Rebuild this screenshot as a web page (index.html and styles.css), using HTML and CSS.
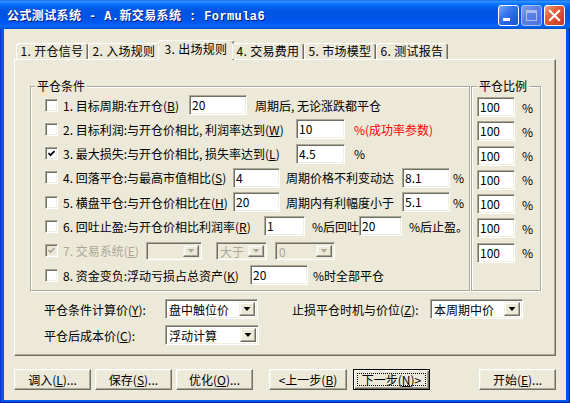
FILE: index.html
```html
<!DOCTYPE html>
<html lang="zh-CN">
<head>
  <meta charset="UTF-8">
  <title>公式测试系统</title>
  <link rel="stylesheet" href="styles.css">
</head>
<body>

<div class="window">
  <!-- Title bar -->
  <div class="titlebar">
    <span class="title">公式测试系统 - A.新交易系统 : Formula6</span>
    <div class="caption">
      <span class="cap cap-min"><i></i></span>
      <span class="cap cap-max"><i></i></span>
      <span class="cap cap-close">
        <svg width="19" height="19" viewBox="0 0 19 19"><path d="M5 5 L14 14 M14 5 L5 14" stroke="#fff" stroke-width="2.2" stroke-linecap="square"/></svg>
      </span>
    </div>
  </div>

  <div class="client">
    <!-- Tabs -->
    <ul class="tabs">
      <li class="tab">1. 开仓信号</li>
      <li class="tab">2. 入场规则</li>
      <li class="tab active">3. 出场规则</li>
      <li class="tab">4. 交易费用</li>
      <li class="tab">5. 市场模型</li>
      <li class="tab">6. 测试报告</li>
    </ul>

    <div class="panel">
      <div class="groups">
        <!-- Exit conditions -->
        <div class="group conds">
          <span class="legend">平仓条件</span>
          <div class="rows">
            <div class="row">
              <span class="chk"></span>
              <span class="lbl w126">1. 目标周期:在开仓(<u>B</u>)</span>
              <span class="edit e58">20</span>
              <span class="ml8">周期后, 无论涨跌都平仓</span>
            </div>
            <div class="row">
              <span class="chk"></span>
              <span class="lbl w233">2. 目标利润:与开仓价相比, 利润率达到(<u>W</u>)</span>
              <span class="edit e49">10</span>
              <span class="ml9 red">%(成功率参数)</span>
            </div>
            <div class="row">
              <span class="chk checked"><svg width="7" height="7" viewBox="0 0 7 7"><path d="M0.5 3 L2.5 5.2 L6.5 1" fill="none" stroke="#000" stroke-width="1.7"/></svg></span>
              <span class="lbl w233">3. 最大损失:与开仓价相比, 损失率达到(<u>L</u>)</span>
              <span class="edit e49">4.5</span>
              <span class="ml9">%</span>
            </div>
            <div class="row">
              <span class="chk"></span>
              <span class="lbl w170">4. 回落平仓:与最高市值相比(<u>S</u>)</span>
              <span class="edit e47">4</span>
              <span class="mid ml6 w116">周期价格不利变动达</span>
              <span class="edit e48">8.1</span>
              <span class="ml3">%</span>
            </div>
            <div class="row">
              <span class="chk"></span>
              <span class="lbl w170">5. 横盘平仓:与开仓价相比在(<u>H</u>)</span>
              <span class="edit e47">20</span>
              <span class="mid ml6 w116">周期内有利幅度小于</span>
              <span class="edit e48">5.1</span>
              <span class="ml3">%</span>
            </div>
            <div class="row">
              <span class="chk"></span>
              <span class="lbl w201">6. 回吐止盈:与开仓价相比利润率(<u>R</u>)</span>
              <span class="edit e41">1</span>
              <span class="mid ml7 w47">%后回吐</span>
              <span class="edit e43">20</span>
              <span class="ml7">%后止盈。</span>
            </div>
            <div class="row disabled">
              <span class="chk checked"><svg width="7" height="7" viewBox="0 0 7 7"><path d="M0.5 3 L2.5 5.2 L6.5 1" fill="none" stroke="#aca899" stroke-width="1.7"/></svg></span>
              <span class="lbl w83">7. 交易系统(<u>E</u>)</span>
              <span class="combo c56"><span class="combo-text"></span><span class="combo-btn"></span></span>
              <span class="combo c51 ml14"><span class="combo-text">大于</span><span class="combo-btn"></span></span>
              <span class="combo c60 ml8"><span class="combo-text">0</span><span class="combo-btn"></span></span>
            </div>
            <div class="row">
              <span class="chk"></span>
              <span class="lbl w187">8. 资金变负:浮动亏损占总资产(<u>K</u>)</span>
              <span class="edit e58">20</span>
              <span class="ml5">%时全部平仓</span>
            </div>
          </div>
        </div>

        <!-- Exit ratio -->
        <div class="group ratios">
          <span class="legend">平仓比例</span>
          <div class="rows">
            <div class="row"><span class="edit e38">100</span><span class="ml7">%</span></div>
            <div class="row"><span class="edit e38">100</span><span class="ml7">%</span></div>
            <div class="row"><span class="edit e38">100</span><span class="ml7">%</span></div>
            <div class="row"><span class="edit e38">100</span><span class="ml7">%</span></div>
            <div class="row"><span class="edit e38">100</span><span class="ml7">%</span></div>
            <div class="row"><span class="edit e38">100</span><span class="ml7">%</span></div>
            <div class="row"><span class="edit e38">100</span><span class="ml7">%</span></div>
          </div>
        </div>
      </div>

      <!-- Price options -->
      <div class="options">
        <div class="opt-row">
          <span class="w121">平仓条件计算价(<u>Y</u>):</span>
          <span class="combo c93"><span class="combo-text">盘中触位价</span><span class="combo-btn"></span></span>
          <span class="w138 ml34">止损平仓时机与价位(<u>Z</u>):</span>
          <span class="combo c93"><span class="combo-text">本周期中价</span><span class="combo-btn"></span></span>
        </div>
        <div class="opt-row">
          <span class="w121">平仓后成本价(<u>C</u>):</span>
          <span class="combo c94"><span class="combo-text">浮动计算</span><span class="combo-btn"></span></span>
        </div>
      </div>
    </div>

    <!-- Dialog buttons -->
    <div class="buttons">
      <button class="btn">调入(<u>L</u>)...</button>
      <button class="btn">保存(<u>S</u>)...</button>
      <button class="btn">优化(<u>O</u>)...</button>
      <button class="btn prev">&lt;上一步(<u>B</u>)</button>
      <button class="btn default"><span class="focus">下一步(<u>N</u>)&gt;</span></button>
      <button class="btn start">开始(<u>E</u>)...</button>
    </div>
  </div>
</div>

</body>
</html>
```

FILE: styles.css
```css
* {
  box-sizing: border-box;
}
html, body {
  margin: 0;
}
body {
  width: 570px;
  height: 403px;
  font-family: "Noto Sans CJK SC", "Liberation Sans", sans-serif;
  font-size: 12px;
  color: #000;
  background: #fff;
}
u {
  text-decoration: underline;
}

/* window frame */
.window {
  width: 570px;
  height: 403px;
  display: flex;
  flex-direction: column;
  background: #0055ea;
  box-shadow: inset 1px 0 #0831d9, inset -1px 0 #001ea0, inset 0 -1px #001ea0;
}
.titlebar {
  height: 29px;
  flex: none;
  display: flex;
  align-items: center;
  padding: 0 5px 0 7px;
  background: linear-gradient(to bottom, #0058ee 0px, #3a93ff 1px, #288eff 2px, #127dff 3px, #036ffc 5px, #0262ee 7px, #0057e5 10px, #0054e3 14px, #0055eb 20px, #005bf5 24px, #026afe 26px, #0062ef 27px, #0052d6 28px);
}
.title {
  color: #fff;
  font-family: "Liberation Mono", "Noto Sans CJK SC", monospace;
  font-weight: bold;
  font-size: 12px;
  letter-spacing: 0.4px;
  white-space: nowrap;
  text-shadow: 1px 1px #0a1883;
}
.caption {
  margin-left: auto;
  display: flex;
  gap: 2px;
  margin-top: 2px;
}
.cap {
  width: 21px;
  height: 21px;
  border: 1px solid #fff;
  border-radius: 3px;
  display: flex;
  align-items: center;
  justify-content: center;
  background: linear-gradient(135deg, #7fa9fb 0%, #3a78ee 35%, #2560e0 70%, #1c50d2 100%);
}
.cap-min {
  align-items: flex-end;
  justify-content: flex-start;
  padding: 0 0 4px 4px;
}
.cap-min i {
  width: 7px;
  height: 3px;
  background: #fff;
}
.cap-max {
  border-color: #a9c0f2;
  background: linear-gradient(135deg, #7f9ff0 0%, #5a81ea 40%, #4b72e2 100%);
}
.cap-max i {
  width: 11px;
  height: 11px;
  border: 1px solid #a8bdf0;
  border-top-width: 3px;
}
.cap-close {
  background: linear-gradient(135deg, #f2a58d 0%, #e3623d 35%, #d6482a 70%, #c23a1c 100%);
}

/* client area */
.client {
  flex: 1;
  margin: 0 4px 4px;
  padding: 11px 10px 10px;
  background: #ece9d8;
  display: flex;
  flex-direction: column;
}

/* tabs */
.tabs {
  display: flex;
  align-items: flex-end;
  height: 20px;
  margin: 0;
  padding: 0 0 0 2px;
  list-style: none;
  position: relative;
  z-index: 1;
}
.tab {
  width: 72px;
  height: 16px;
  margin-bottom: 1px;
  border: 1px solid;
  border-bottom: none;
  border-color: #fff #716f64 #716f64 #fff;
  border-radius: 3px 3px 0 0;
  box-shadow: inset -1px 0 #aca899;
  background: #ece9d8;
  text-align: center;
  line-height: 14px;
  letter-spacing: 0.3px;
  white-space: nowrap;
}
.tab.active {
  width: 76px;
  height: 20px;
  margin: 0 -2px;
  line-height: 16px;
}

/* tab page */
.panel {
  height: 297px;
  margin-top: -1px;
  border: 1px solid;
  border-color: #fff #716f64 #716f64 #fff;
  box-shadow: inset -1px -1px #aca899;
  padding: 26px 0 0 15px;
}
.groups {
  display: flex;
  gap: 1px;
}
.group {
  position: relative;
  height: 205px;
  border: 1px solid #aca899;
  box-shadow: inset 1px 1px #fff, 1px 1px #fff;
}
.legend {
  position: absolute;
  top: -8px;
  left: 4px;
  padding: 0 2px;
  line-height: 14px;
  background: #ece9d8;
}
.conds {
  width: 440px;
  padding: 8px 0 0 14px;
}
.ratios {
  width: 70px;
  padding: 10px 0 0 5px;
}
.ratios .legend {
  left: 5px;
}
.rows {
  display: flex;
  flex-direction: column;
  gap: 4.3px;
}
.row {
  display: flex;
  align-items: center;
  height: 20px;
  white-space: nowrap;
}
.row.disabled {
  color: #aca899;
}

/* checkbox */
.chk {
  width: 13px;
  height: 13px;
  flex: none;
  display: flex;
  align-items: center;
  justify-content: center;
  border: 1px solid;
  border-color: #aca899 #fff #fff #aca899;
  box-shadow: inset 1px 1px #716f64, inset -1px -1px #f1efe2;
  background: #fff;
}
.disabled .chk {
  background: #ece9d8;
}

.lbl {
  margin-left: 5px;
  flex: none;
}
.mid {
  flex: none;
}

/* edit box */
.edit {
  height: 20px;
  flex: none;
  padding: 0 2px;
  line-height: 17px;
  border: 1px solid;
  border-color: #aca899 #fff #fff #aca899;
  box-shadow: inset 1px 1px #716f64, inset -1px -1px #f1efe2;
  background: #fff;
}

/* combo box */
.combo {
  display: flex;
  flex: none;
  height: 20px;
  padding: 2px;
  border: 1px solid;
  border-color: #aca899 #fff #fff #aca899;
  box-shadow: inset 1px 1px #716f64, inset -1px -1px #f1efe2;
  background: #fff;
}
.combo-text {
  flex: 1;
  padding-left: 1px;
  line-height: 15px;
}
.combo-btn {
  width: 16px;
  display: flex;
  align-items: center;
  justify-content: center;
  background: #ece9d8;
  border: 1px solid;
  border-color: #f1efe2 #716f64 #716f64 #f1efe2;
  box-shadow: inset -1px -1px #aca899, inset 1px 1px #fff;
}
.combo-btn::after {
  content: "";
  width: 7px;
  height: 4px;
  background: #000;
  clip-path: polygon(0 0, 100% 0, 50% 100%);
}
.disabled .combo {
  height: 18px;
  background: #ece9d8;
}
.disabled .combo-text {
  line-height: 13px;
}
.disabled .combo-btn::after {
  background: #aca899;
}

.red {
  color: #f00;
}

/* price options */
.options {
  margin-top: 8px;
  padding-left: 14px;
  display: flex;
  flex-direction: column;
  gap: 6px;
}
.opt-row {
  display: flex;
  align-items: center;
  height: 20px;
  white-space: nowrap;
}
.opt-row > span:not(.combo) {
  flex: none;
}

/* buttons */
.buttons {
  display: flex;
  gap: 4px;
  margin-top: 13px;
}
.btn {
  width: 77px;
  height: 21px;
  padding: 0;
  font: inherit;
  color: #000;
  background: #ece9d8;
  border: 1px solid;
  border-color: #fff #716f64 #716f64 #fff;
  box-shadow: inset -1px -1px #aca899, inset 1px 1px #f1efe2;
  white-space: nowrap;
}
.btn.prev {
  margin-left: 12px;
  width: 78px;
}
.btn.default {
  margin-left: 2px;
  border-color: #000;
  box-shadow: inset 1px 1px #fff, inset -1px -1px #716f64, inset -2px -2px #aca899;
  padding: 3px;
}
.focus {
  display: block;
  height: 13px;
  line-height: 11px;
  border: 1px dotted #000;
}
.btn.start {
  margin-left: auto;
}

/* sizes */
.w47 { width: 47px; }
.w83 { width: 83px; }
.w116 { width: 116px; }
.w121 { width: 121px; }
.w126 { width: 126px; }
.w138 { width: 138px; }
.w170 { width: 170px; }
.w187 { width: 187px; }
.w201 { width: 201px; }
.w233 { width: 233px; }
.e38 { width: 38px; }
.e41 { width: 41px; }
.e43 { width: 43px; }
.e47 { width: 47px; }
.e48 { width: 48px; }
.e49 { width: 49px; }
.e58 { width: 58px; }
.c51 { width: 51px; }
.c56 { width: 56px; }
.c60 { width: 60px; }
.c93 { width: 93px; }
.c94 { width: 94px; }
.ml3 { margin-left: 3px; }
.ml5 { margin-left: 5px; }
.ml6 { margin-left: 6px; }
.ml7 { margin-left: 7px; }
.ml8 { margin-left: 8px; }
.ml9 { margin-left: 9px; }
.ml14 { margin-left: 14px; }
.ml34 { margin-left: 34px; }
```
